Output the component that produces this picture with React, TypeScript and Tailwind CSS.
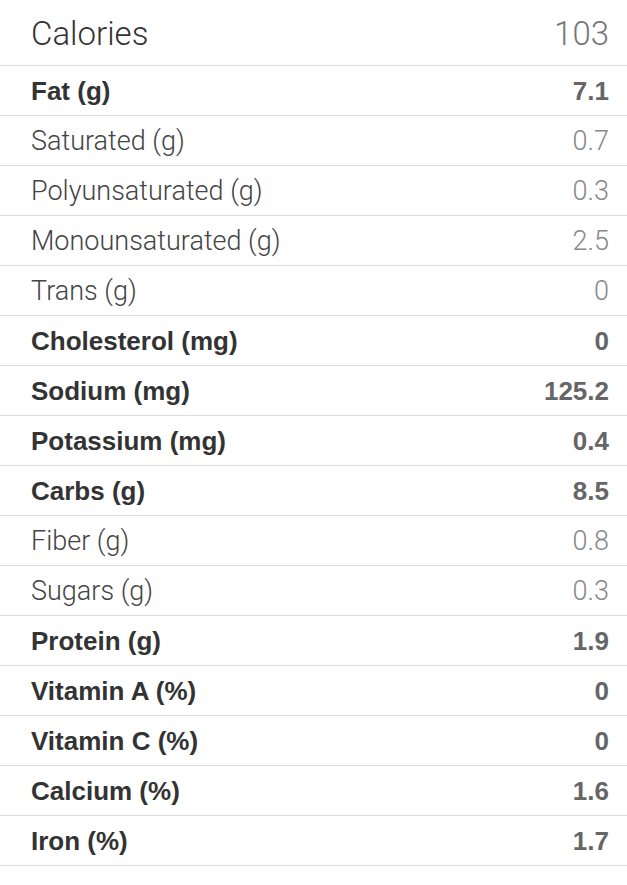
import React from "react";

type Row = { label: string; value: string; bold: boolean };

const rows: Row[] = [
  { label: "Fat (g)", value: "7.1", bold: true },
  { label: "Saturated (g)", value: "0.7", bold: false },
  { label: "Polyunsaturated (g)", value: "0.3", bold: false },
  { label: "Monounsaturated (g)", value: "2.5", bold: false },
  { label: "Trans (g)", value: "0", bold: false },
  { label: "Cholesterol (mg)", value: "0", bold: true },
  { label: "Sodium (mg)", value: "125.2", bold: true },
  { label: "Potassium (mg)", value: "0.4", bold: true },
  { label: "Carbs (g)", value: "8.5", bold: true },
  { label: "Fiber (g)", value: "0.8", bold: false },
  { label: "Sugars (g)", value: "0.3", bold: false },
  { label: "Protein (g)", value: "1.9", bold: true },
  { label: "Vitamin A (%)", value: "0", bold: true },
  { label: "Vitamin C (%)", value: "0", bold: true },
  { label: "Calcium (%)", value: "1.6", bold: true },
  { label: "Iron (%)", value: "1.7", bold: true },
];

export default function App() {
  return (
    <div className="w-[627px] h-[885px] bg-white overflow-hidden">
      <div className="flex h-[66px] items-center justify-between border-b border-[#dcdcdc] pl-[31px] pr-[18px] pt-[2px]">
        <span className="font-['Roboto',sans-serif] font-light text-[33px] text-[#333]">
          Calories
        </span>
        <span className="font-['Roboto',sans-serif] font-light text-[33px] text-[#777]">
          103
        </span>
      </div>
      {rows.map((r) => (
        <div
          key={r.label}
          className="flex h-[50px] items-center justify-between border-b border-[#dcdcdc] pl-[31px] pr-[18px] pt-[2px]"
        >
          {r.bold ? (
            <>
              <span className="font-['Liberation_Sans',Arial,sans-serif] font-bold text-[26px] text-[#333]">
                {r.label}
              </span>
              <span className="font-['Liberation_Sans',Arial,sans-serif] font-bold text-[26px] text-[#666]">
                {r.value}
              </span>
            </>
          ) : (
            <>
              <span className="font-['Roboto',sans-serif] font-light text-[27px] text-[#444]">
                {r.label}
              </span>
              <span className="font-['Roboto',sans-serif] font-light text-[27px] text-[#888]">
                {r.value}
              </span>
            </>
          )}
        </div>
      ))}
    </div>
  );
}
